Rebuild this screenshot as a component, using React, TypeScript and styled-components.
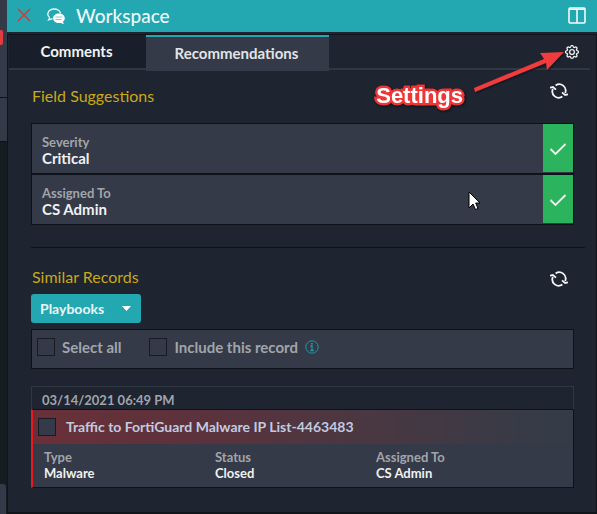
import React from "react";
import styled, { createGlobalStyle } from "styled-components";
import { BsGear } from "react-icons/bs";

const GlobalStyle = createGlobalStyle`
  *, *::before, *::after { box-sizing: border-box; }
  body {
    margin: 0;
    background: #1e2430;
    color: #eef0f2;
    font-family: Lato, "Liberation Sans", sans-serif;
    font-size: 14px;
    line-height: 18px;
  }
  button { font: inherit; color: inherit; border: 0; padding: 0; background: none; cursor: pointer; }
  svg { display: block; }
`;

const Page = styled.div`
  display: grid;
  grid-template-columns: 7px minmax(0, 1fr);
  min-height: 100vh;
`;

const Rail = styled.aside`
  display: flex;
  flex-direction: column;
  background: #151c22;
  overflow: hidden;
`;

const RailBlock = styled.div<{ $height: number }>`
  height: ${(p) => p.$height}px;
  background: #343a47;
  border-bottom: 1px solid #0e131a;
`;

const RailBadge = styled.div`
  width: 3px;
  height: 15px;
  margin-top: 30px;
  border-radius: 0 2px 2px 0;
  background: #e23b40;
`;

const RailThumb = styled.div`
  height: 30px;
  margin-top: auto;
  margin-right: 1px;
  border-top-right-radius: 3px;
  background: #343a47;
`;

const Panel = styled.main`
  display: flex;
  flex-direction: column;
`;

const Header = styled.header`
  display: flex;
  align-items: center;
  height: 32px;
  padding: 0 11px 2px 10px;
  background: #23a7b1;
`;

const Title = styled.h1`
  flex: 1;
  margin: 2px 0 0 11px;
  font-size: 19px;
  line-height: 24px;
  font-weight: 500;
  color: #f0fafb;
`;

const IconButton = styled.button`
  display: flex;
  color: #ffffff;
`;

const ChatIcon = styled.svg`
  margin: 2px 0 0 16px;
`;

const Body = styled.div`
  flex: 1;
  margin-top: 2px;
  padding: 0 6px 0 1px;
  border: solid #10151c;
  border-width: 1px 1px 2px;
`;

const TabBar = styled.div`
  position: relative;
  display: flex;
  align-items: flex-start;
  height: 36px;
  box-shadow: inset 0 -1px #1e2430, inset 0 -3px #303642;
`;

const Tab = styled.button<{ $active?: boolean; $width: number }>`
  width: ${(p) => p.$width}px;
  height: ${(p) => (p.$active ? 36 : 33)}px;
  padding: 0 2px 2px 0;
  font-size: 15px;
  font-weight: 700;
  color: ${(p) => (p.$active ? "#e2e4e8" : "#f2f4f5")};
  background: ${(p) => (p.$active ? "#343a48" : "#181f2a")};
  border-top: ${(p) => (p.$active ? "2px solid #23a7b1" : "0")};
`;

const SettingsButton = styled(IconButton)`
  margin: 10px 11px 0 auto;
  svg { stroke: #ffffff; stroke-width: 0.4; }
`;

const Callout = styled.div`
  position: absolute;
  z-index: 1;
  top: 11px;
  right: 19px;
  display: flex;
  pointer-events: none;
`;

const CalloutText = styled.span`
  margin-top: 36px;
  margin-right: 8px;
  font: 700 22px/28px "Liberation Sans", Arial, sans-serif;
  color: #ffffff;
  -webkit-text-stroke: 5px #ee3637;
  paint-order: stroke fill;
  filter: drop-shadow(1px 1px 1px #0a0e14);
`;

const Section = styled.section`
  margin: 0 4px 0 22px;
  padding: 12px 12px 0 0;
`;

const SimilarSection = styled(Section)`
  padding-top: 0;
`;

const SectionHead = styled.div`
  display: flex;
  align-items: flex-start;
  justify-content: space-between;
  height: 26px;
  padding: 0 6px 0 1px;
`;

const SectionTitle = styled.h2`
  margin: 4px 0 0;
  font-size: 16px;
  line-height: 18px;
  font-weight: 400;
  color: #c9a918;
`;

const RefreshButton = styled(IconButton)<{ $low?: boolean }>`
  padding-top: ${(p) => (p.$low ? 7 : 0)}px;
`;

const Suggestion = styled.div`
  display: flex;
  height: 51px;
  border: 1px solid #0e131a;
  background: #343a47;
`;

const Suggestions = styled.div`
  position: relative;
  margin-top: 14px;
`;

const Field = styled.dl<{ $small?: boolean }>`
  flex: 1;
  margin: 0;
  padding: ${(p) => (p.$small ? "5px 0 5px 11px" : "10px")};
  line-height: 16px;
  font-weight: 700;
`;

const Label = styled.dt`
  font-size: 13px;
  color: #a1a5ab;
`;

const Value = styled.dd<{ $small?: boolean }>`
  margin: 0;
  font-size: ${(p) => (p.$small ? 13 : 15)}px;
  color: #f0f1f3;
`;

const Accept = styled.button`
  display: grid;
  place-items: center;
  width: 30px;
  margin-bottom: 1px;
  padding-top: 2px;
  background: #2bb35e;
`;

const Cursor = styled.svg`
  position: absolute;
  top: 68px;
  right: 93px;
`;

const Divider = styled.hr`
  height: 1px;
  margin: 22px 5px 16px 22px;
  border: 0;
  background: #0e131a;
`;

const Dropdown = styled.button`
  display: flex;
  align-items: center;
  justify-content: space-between;
  width: 110px;
  height: 29px;
  margin-top: 4px;
  padding: 0 10px 0 9px;
  border-radius: 3px;
  background: #23a7b1;
  font-weight: 700;
  color: #e8f7f8;
`;

const SelectBar = styled.div`
  display: flex;
  align-items: center;
  height: 40px;
  margin-top: 6px;
  padding: 0 5px 4px;
  gap: 28px;
  border: 1px solid #0e131a;
  background: #343a47;
`;

const CheckLabel = styled.label`
  display: flex;
  align-items: center;
  gap: 7px;
  font-size: 15px;
  font-weight: 700;
  color: #a1a5ab;
`;

const CheckBox = styled.input`
  appearance: none;
  flex: none;
  width: 18px;
  height: 18px;
  margin: 0;
  border: 1px solid #161b23;
  background: transparent;
  &:checked { background: #23a7b1; }
`;

const Timestamp = styled.time`
  display: block;
  height: 23px;
  margin-top: 17px;
  padding: 5px 10px 0;
  border: 1px solid #303642;
  border-bottom: 0;
  font-size: 13px;
  line-height: 16px;
  font-weight: 700;
  color: #a1a5ab;
`;

const Record = styled.article`
  border: 1px solid #0e131a;
  border-left: 2px solid #e8191f;
  background: #343a47;
`;

const RecordTitle = styled.label`
  display: flex;
  align-items: center;
  gap: 10px;
  height: 34px;
  padding-left: 5px;
  background: linear-gradient(90deg, #6a3039, #5c323c 30%, #483842 65%, #353b47 94%);
  font-size: 14px;
  font-weight: 700;
  color: #c1cbe0;
  input { background: #343a47; }
`;

const RecordFields = styled.div`
  display: grid;
  grid-template-columns: 171px 161px 1fr;
  height: 43px;
`;

function Reload() {
  return (
    <svg width="18" height="16" viewBox="0 0 18 16" fill="none" stroke="#f4f5f6" strokeWidth="1.8">
      <path d="M5.6 2.4A6.4 6.4 0 0 1 15.2 10M12.4 13.6A6.4 6.4 0 0 1 2.8 6" />
      <path d="M0 4.6 2.9 4 6 6.6M12 9.4 15.1 12 18 11.4" />
    </svg>
  );
}

function SectionHeading({ title, lowIcon }: { title: string; lowIcon?: boolean }) {
  return (
    <SectionHead>
      <SectionTitle>{title}</SectionTitle>
      <RefreshButton aria-label={`Refresh ${title}`} $low={lowIcon}><Reload /></RefreshButton>
    </SectionHead>
  );
}

const suggestions = [
  { label: "Severity", value: "Critical" },
  { label: "Assigned To", value: "CS Admin" },
];

const recordFields = [
  { label: "Type", value: "Malware" },
  { label: "Status", value: "Closed" },
  { label: "Assigned To", value: "CS Admin" },
];

export default function App() {
  return (
    <>
      <GlobalStyle />
      <Page>
        <Rail>
          <RailBlock $height={98}><RailBadge /></RailBlock>
          <RailBlock $height={44} />
          <RailThumb />
        </Rail>
        <Panel>
          <Header>
            <IconButton aria-label="Close">
              <svg width="14" height="14" viewBox="0 0 14 14" stroke="#d3393d" strokeWidth="1.5">
                <path d="M1 1 13 13M13 1 1 13" />
              </svg>
            </IconButton>
            <ChatIcon width="18" height="17" viewBox="0 0 18 17" fill="none">
              <path d="M2.8 9.8C-1.2 6.7 1.4 1 7 1c3.5 0 6.2 1.8 6.4 4.2M2.8 9.8 1.6 12l4-1.3" stroke="#eafafa" strokeWidth="1.3" />
              <path d="M12 5.5c3.4 0 5.8 2.1 5.8 4.8 0 1.6-.8 2.7-1.9 3.5l1 2.5-3.2-1.4c-4.2.8-7.6-1.3-7.6-4.6 0-2.7 2.5-4.8 5.9-4.8Z" fill="#ffffff" />
              <path d="M8.5 9h7M8.5 11.5h6" stroke="#65bfc6" strokeWidth=".8" />
            </ChatIcon>
            <Title>Workspace</Title>
            <IconButton aria-label="Change layout">
              <svg width="18" height="17" viewBox="0 0 18 17" fill="none" stroke="#f2fbfb" strokeWidth="1.6">
                <rect x="1" y="1" width="16" height="15" rx="1" />
                <path d="M1 2.3h16M9 2v14" />
              </svg>
            </IconButton>
          </Header>
          <Body>
            <TabBar>
              <Tab $width={137}>Comments</Tab>
              <Tab $width={183} $active>Recommendations</Tab>
              <SettingsButton aria-label="Settings"><BsGear size={14} /></SettingsButton>
              <Callout>
                <CalloutText>Settings</CalloutText>
                <svg width="100" height="54" viewBox="0 0 100 54">
                  <path d="M5 48 4 43 73 14 69 9 94 8 77 26 76 19Z" fill="#111720" opacity=".6" />
                  <path d="M4 46 3 42 73 13 69 7 93 6 76 24 75 17Z" fill="#f13b3c" />
                </svg>
              </Callout>
            </TabBar>
            <Section>
              <SectionHeading title="Field Suggestions" />
              <Suggestions>
                {suggestions.map((s) => (
                  <Suggestion key={s.label}>
                    <Field><Label>{s.label}</Label><Value>{s.value}</Value></Field>
                    <Accept aria-label={`Apply ${s.label}`}>
                      <svg width="18" height="14" viewBox="0 0 18 14" fill="none" stroke="#eefaf2" strokeWidth="1.8">
                        <path d="m1.5 7 5 5 10-10" />
                      </svg>
                    </Accept>
                  </Suggestion>
                ))}
                <Cursor width="13" height="20" viewBox="0 0 13 20">
                  <path d="M1 1v16l4-4 2.5 5.5 2.5-1L7.7 12H12Z" fill="#ffffff" stroke="#000000" />
                </Cursor>
              </Suggestions>
            </Section>
            <Divider />
            <SimilarSection>
              <SectionHeading title="Similar Records" lowIcon />
              <Dropdown aria-haspopup="menu">
                Playbooks
                <svg width="9" height="5" viewBox="0 0 9 5"><path d="M0 0h9L4.5 5Z" fill="#ffffff" /></svg>
              </Dropdown>
              <SelectBar>
                <CheckLabel><CheckBox type="checkbox" />Select all</CheckLabel>
                <CheckLabel>
                  <CheckBox type="checkbox" />Include this record
                  <svg width="14" height="14" viewBox="0 0 14 14" fill="none" stroke="#2498a4">
                    <circle cx="7" cy="7" r="6.2" />
                    <path d="M5.3 6H7v4.5M5.3 10.5h3.6" strokeWidth="1.3" />
                    <path d="M6 3.8h1.8" strokeWidth="1.6" />
                  </svg>
                </CheckLabel>
              </SelectBar>
              <Timestamp dateTime="2021-03-14T18:49">03/14/2021 06:49 PM</Timestamp>
              <Record>
                <RecordTitle><CheckBox type="checkbox" />Traffic to FortiGuard Malware IP List-4463483</RecordTitle>
                <RecordFields>
                  {recordFields.map((f) => (
                    <Field $small key={f.label}><Label>{f.label}</Label><Value $small>{f.value}</Value></Field>
                  ))}
                </RecordFields>
              </Record>
            </SimilarSection>
          </Body>
        </Panel>
      </Page>
    </>
  );
}
